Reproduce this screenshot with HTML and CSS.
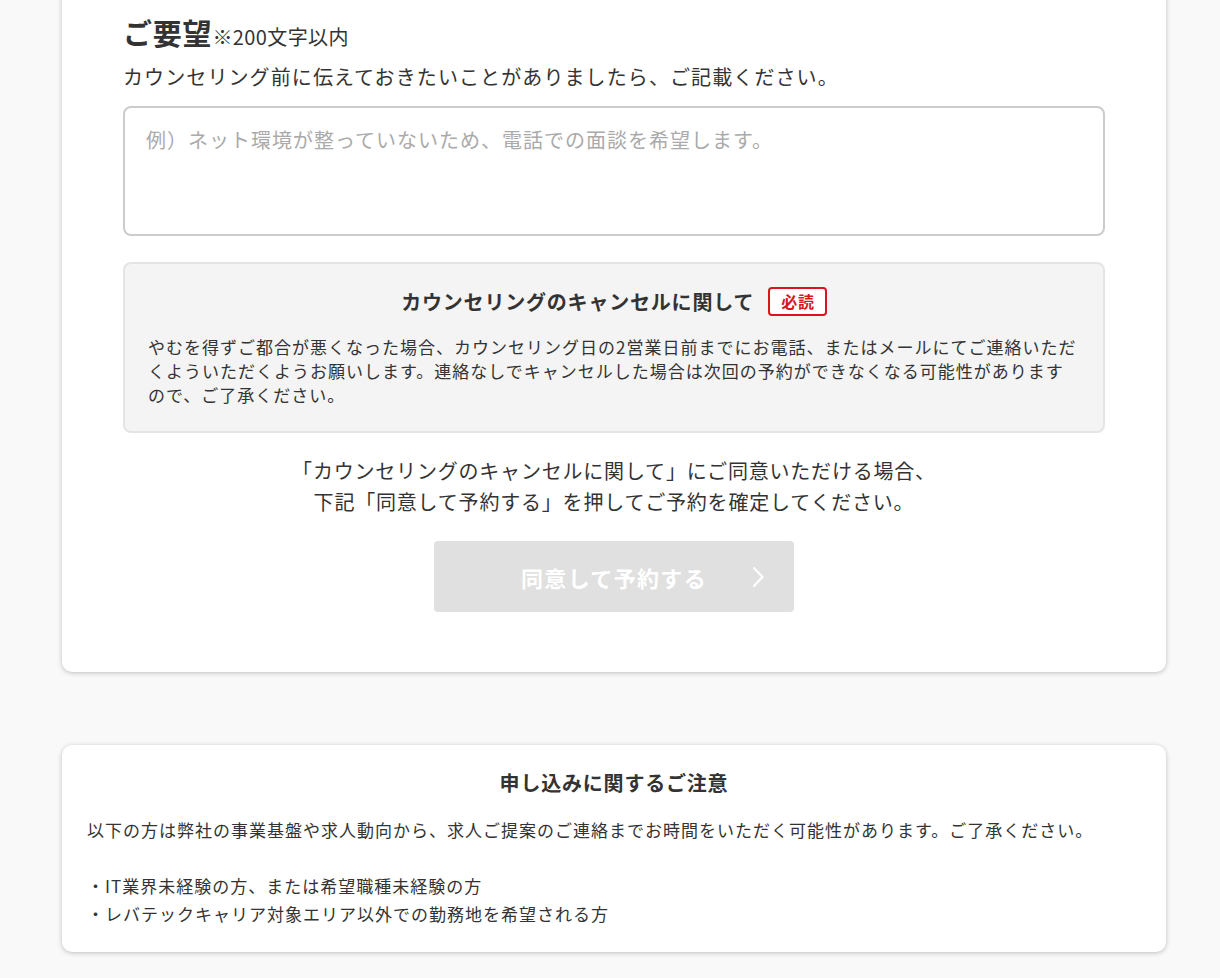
FILE: index.html
```html
<!DOCTYPE html>
<html lang="ja">
<head>
    <meta charset="UTF-8">
    <meta name="viewport" content="width=device-width, initial-scale=1.0">
    <title>カウンセリング予約</title>
    <link rel="stylesheet" href="styles.css">
</head>
<body>
    <main class="page">

        <section class="card">
            <h2 class="request-title">ご要望<span class="request-note">※200文字以内</span></h2>
            <p class="request-lead">カウンセリング前に伝えておきたいことがありましたら、ご記載ください。</p>
            <textarea class="request-input" placeholder="例）ネット環境が整っていないため、電話での面談を希望します。"></textarea>

            <div class="cancel-box">
                <h3 class="cancel-title">カウンセリングのキャンセルに関して<span class="badge">必読</span></h3>
                <p class="cancel-text">やむを得ずご都合が悪くなった場合、カウンセリング日の2営業日前までにお電話、またはメールにてご連絡いただくよういただくようお願いします。連絡なしでキャンセルした場合は次回の予約ができなくなる可能性がありますので、ご了承ください。</p>
            </div>

            <p class="agree-text">「カウンセリングのキャンセルに関して」にご同意いただける場合、<br>下記「同意して予約する」を押してご予約を確定してください。</p>

            <button class="submit-btn" type="button" disabled>
                同意して予約する
                <svg class="chevron" width="12" height="22" viewBox="0 0 12 22">
                    <path d="M1.5 1.5 L10.5 11 L1.5 20.5" fill="none" stroke="#fff" stroke-width="2.2"/>
                </svg>
            </button>
        </section>

        <section class="card notice">
            <h3 class="notice-title">申し込みに関するご注意</h3>
            <p class="notice-text">以下の方は弊社の事業基盤や求人動向から、求人ご提案のご連絡までお時間をいただく可能性があります。ご了承ください。</p>
            <ul class="notice-list">
                <li>・IT業界未経験の方、または希望職種未経験の方</li>
                <li>・レバテックキャリア対象エリア以外での勤務地を希望される方</li>
            </ul>
        </section>

    </main>
</body>
</html>
```

FILE: styles.css
```css
html{
    margin: 0;
}

body{
    margin: 0;
    background-color: #f9f9f9;
    color: #333;
    font-family: "Noto Sans CJK JP", "Noto Sans", sans-serif;
    letter-spacing: 0.05em;
}

.page{
    width: 1104px;
    margin-left: 62px;
    margin-top: -30px;
    padding-bottom: 40px;
}

.card{
    background-color: #fff;
    border-radius: 10px;
    box-shadow: 0 1px 5px rgba(0, 0, 0, 0.24);
    padding: 41px 61px 60px;
    display: flex;
    flex-direction: column;
}

/* ご要望 */
.request-title{
    margin: 0;
    font-size: 29px;
    line-height: 42px;
    font-weight: bold;
}

.request-note{
    font-size: 20px;
    font-weight: normal;
    line-height: 1;
    letter-spacing: 0.02em;
}

.request-lead{
    margin: 10px 0 0;
    font-size: 20px;
    line-height: 28px;
    letter-spacing: 0.055em;
}

.request-input{
    margin-top: 15px;
    height: 130px;
    box-sizing: border-box;
    border: 2px solid #ccc;
    border-radius: 8px;
    padding: 18px 21px;
    font-family: inherit;
    font-size: 20px;
    line-height: 28px;
    letter-spacing: 0.05em;
    color: #333;
    resize: none;
}

.request-input::placeholder{
    color: #aaa;
}

/* キャンセル */
.cancel-box{
    margin-top: 26px;
    background-color: #f4f4f4;
    border: 2px solid #e4e4e4;
    border-radius: 8px;
    padding: 23px 23px 24px;
}

.cancel-title{
    margin: 0;
    font-size: 20px;
    line-height: 28px;
    font-weight: bold;
    display: flex;
    align-items: center;
    justify-content: center;
}

.badge{
    margin-left: 14px;
    border: 2px solid #d9161f;
    border-radius: 4px;
    color: #d9161f;
    font-size: 16px;
    line-height: 25px;
    padding: 0 10px 0 11px;
    background-color: #fff;
}

.cancel-text{
    margin: 19px 0 0;
    font-size: 17px;
    line-height: 24px;
    letter-spacing: 1px;
}

.agree-text{
    margin: 22px 0 0;
    font-size: 20px;
    line-height: 31px;
    text-align: center;
}

.submit-btn{
    position: relative;
    align-self: center;
    margin-top: 24px;
    width: 360px;
    height: 71px;
    border: none;
    border-radius: 4px;
    background-color: #e0e0e0;
    color: #fff;
    font-family: inherit;
    font-size: 22px;
    font-weight: bold;
    letter-spacing: 0.06em;
    padding: 0;
}

.chevron{
    position: absolute;
    right: 30px;
    top: 25px;
}

/* ご注意 */
.notice{
    margin-top: 73px;
    padding: 23px 25px 24px;
}

.notice-title{
    margin: 0;
    font-size: 20px;
    line-height: 30px;
    font-weight: bold;
    text-align: center;
}

.notice-text{
    margin: 18px 0 28px;
    font-size: 17px;
    line-height: 28px;
    letter-spacing: 1px;
}

.notice-list{
    margin: 0;
    padding: 0;
    list-style: none;
    font-size: 17px;
    line-height: 28px;
    letter-spacing: 1px;
}
```
